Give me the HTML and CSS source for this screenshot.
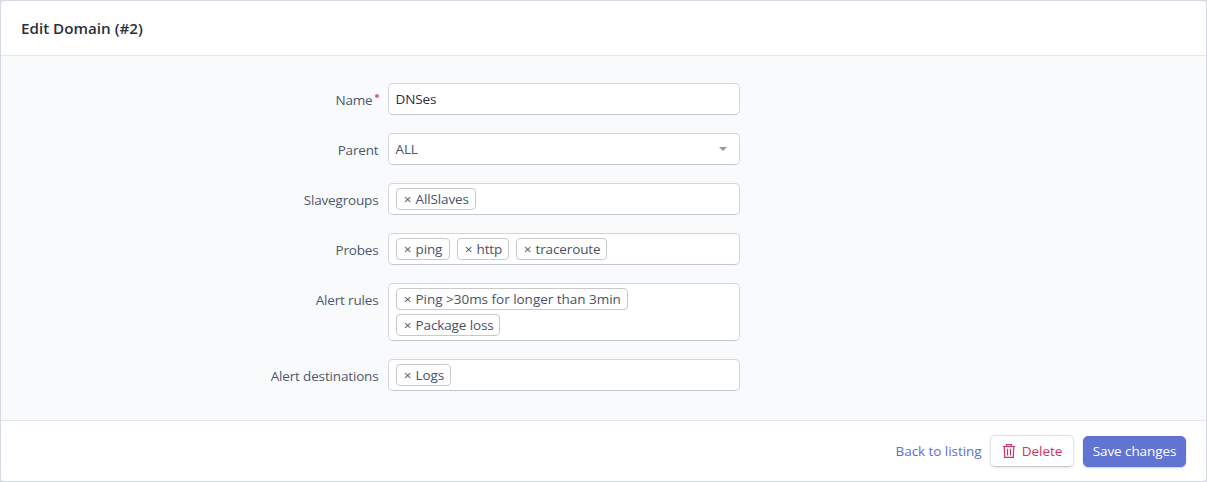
FILE: index.html
```
<!DOCTYPE html>
<html lang="en">
<head>
<meta charset="utf-8">
<title>Edit Domain</title>
<link rel="stylesheet" href="styles.css">
</head>
<body>
<form class="panel">
  <header class="panel-header"><h1 class="title">Edit Domain (#2)</h1></header>
  <main class="fields">
    <div class="row"><label class="label"><span>Name</span><span class="required"></span></label><div class="control text"><span>DNSes</span></div></div>
    <div class="row"><label class="label"><span>Parent</span></label><div class="control select"><span>ALL</span><svg class="caret" viewBox="0 0 8 4"><path d="M0 0h8L4 4z"/></svg></div></div>
    <div class="row"><label class="label"><span>Slavegroups</span></label><div class="control">
      <span class="tag w-allslaves"><i class="x">×</i><span>AllSlaves</span></span></div></div>
    <div class="row"><label class="label"><span>Probes</span></label><div class="control">
      <span class="tag w-ping"><i class="x">×</i><span>ping</span></span><span class="tag w-http"><i class="x">×</i><span>http</span></span><span class="tag w-trace"><i class="x">×</i><span>traceroute</span></span></div></div>
    <div class="row"><label class="label"><span>Alert rules</span></label><div class="control">
      <span class="tag w-rule"><i class="x">×</i><span>Ping &gt;30ms for longer than 3min</span></span><span class="tag w-loss"><i class="x">×</i><span>Package loss</span></span></div></div>
    <div class="row"><label class="label"><span>Alert destinations</span></label><div class="control">
      <span class="tag w-logs"><i class="x">×</i><span>Logs</span></span></div></div>
  </main>
  <footer class="actions">
    <a class="back">Back to listing</a>
    <button type="button" class="btn delete"><svg class="trash" viewBox="0 0 14 14"><path d="M.8 2.500h12.400M4.500 2.500V.6h5v1.900M2.200 2.500l.5 10.900h8.600l.5-10.900M5.500 4.800v6.700M8.500 4.800v6.700"/></svg><span>Delete</span></button>
    <button type="button" class="btn save"><span>Save changes</span></button>
  </footer>
</form>
</body>
</html>
```
FILE: styles.css
```
* { box-sizing: border-box; }
body { margin: 0; background: #dadce5; font: 13.5px/20px "Open Sans", "Noto Sans", sans-serif; letter-spacing: -.12px; color: #48526a; }
.panel { display: flex; flex-direction: column; height: 482px; border: 1px solid #d5d9e3; border-radius: 4px; overflow: hidden; background: #fff; }
.panel-header { height: 55px; padding: 17px 20px; border-bottom: 1px solid #e3e8ee; }
.title { margin: 0; font-size: 15.2px; letter-spacing: 0; line-height: 20px; font-weight: 600; color: #2b2f3d; white-space: nowrap; }
.fields { flex: 1; background: #f9fafc; padding-top: 27px; display: flex; flex-direction: column; gap: 18px; }
.row { display: flex; align-items: flex-start; }
.label { width: 378px; padding: 7px .5px 0 0; display: flex; justify-content: flex-end; white-space: nowrap; letter-spacing: -.16px; color: #4f586b; }
.required { width: 4px; height: 4px; margin: 4px -.5px 0 2.500px; border-radius: 50%; background: #d9668a; }
.control { width: 352px; min-height: 32px; margin-left: 9px; padding: 4px 7px; display: flex; flex-wrap: wrap; gap: 4px 7px; background: #fff; border: 1px solid #d3d5df; border-bottom-color: #c4c6d2; border-radius: 5px; }
.text, .select { padding: 5px 7px 4px 6.500px; }
.text { color: #2b2f3d; }
.select { justify-content: space-between; }
.caret { width: 8px; height: 4px; margin: 8px 5px 0 0; fill: #999; }
.tag { height: 22px; padding: 0 0 0 6.500px; border: 1px solid #c9c9c9; border-radius: 4px; display: flex; gap: 4px; line-height: 20px; white-space: nowrap; }
.x { font-style: normal; width: 8px; text-align: center; color: #444d5f; }
.w-allslaves { width: 80px; }
.w-ping { width: 54px; }
.w-http { width: 52px; }
.w-trace { width: 91px; }
.w-rule { width: 232px; letter-spacing: -.02px; }
.w-loss { width: 104px; }
.w-logs { width: 55px; }
.actions { height: 61px; padding: 0 20px; border-top: 1px solid #e3e8ee; display: flex; justify-content: flex-end; align-items: center; white-space: nowrap; }
.back { color: #5c70d2; letter-spacing: -.06px; margin-right: 8.500px; }
.btn { display: flex; align-items: center; justify-content: center; padding: 0; font: inherit; letter-spacing: -.08px; border-radius: 5px; white-space: nowrap; }
.delete { width: 84px; height: 32px; gap: 6px; color: #ce3560; background: #fff; border: 1px solid #e2e3e8; border-bottom-color: #c8c9d0; box-shadow: 0 1px 3px #0000001a; }
.trash { width: 14px; height: 14px; fill: none; stroke: currentColor; stroke-width: 1.200; }
.save { width: 103px; height: 31px; margin-left: 9px; border: 1px solid #5f72d1; color: #fff; background: #6174d2; box-shadow: 0 1px 2px #00000033; }
```
